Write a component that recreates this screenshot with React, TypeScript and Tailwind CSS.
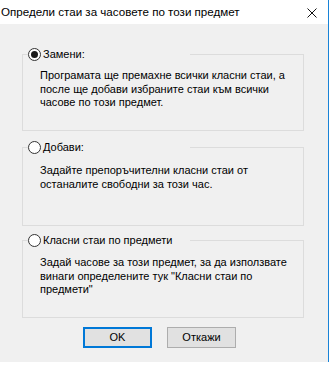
import React from "react";

type Option = {
  label: string;
  text: string;
  checked: boolean;
  gap: string;
  height: string;
  pad: string;
};

const options: Option[] = [
  {
    label: "Замени:",
    text: "Програмата ще премахне всички класни стаи, а после ще добави избраните стаи към всички часове по този предмет.",
    checked: true,
    gap: "mt-[24px]",
    height: "h-[83px]",
    pad: "pt-[8px]",
  },
  {
    label: "Добави:",
    text: "Задайте препоръчителни класни стаи от останалите свободни за този час.",
    checked: false,
    gap: "mt-[10px]",
    height: "h-[85px]",
    pad: "pt-[10px]",
  },
  {
    label: "Класни стаи по предмети",
    text: 'Задай часове за този предмет, за да използвате винаги определените тук "Класни стаи по предмети"',
    checked: false,
    gap: "mt-[8px]",
    height: "h-[84px]",
    pad: "pt-[9px]",
  },
];

function Radio({ checked }: { checked: boolean }) {
  return (
    <span className="flex h-[13px] w-[13px] shrink-0 items-center justify-center rounded-full border border-[#333333] bg-white">
      {checked && <span className="h-[7px] w-[7px] rounded-full bg-[#1a1a1a]" />}
    </span>
  );
}

export default function App() {
  return (
    <div className="h-[369px] w-[333px] bg-white font-['Liberation_Sans',sans-serif] text-[11px] text-black">
      <div className="flex h-[362px] w-[329px] flex-col border-r border-[#1883d7]">
        {/* title bar */}
        <div className="flex h-[24px] shrink-0 items-center justify-between bg-white pl-[1px] pr-[11px]">
          <span className="text-[11.6px] leading-none">Определи стаи за часовете по този предмет</span>
          <svg width="10" height="10" viewBox="0 0 10 10" className="mt-[1px]">
            <path d="M0.5 0.5 L9.5 9.5 M9.5 0.5 L0.5 9.5" stroke="#111" strokeWidth="1" />
          </svg>
        </div>

        <div className="flex flex-1 flex-col bg-[#f0f0f0]">
          {options.map((o) => (
            <fieldset
              key={o.label}
              className={`${o.gap} ${o.height} ml-[22px] w-[282px] border border-[#dcdcdc] px-0 pb-0`}
            >
              <legend className="ml-[5px] flex h-[13px] w-[162px] items-center gap-[2px] bg-[#f0f0f0] p-0 leading-none">
                <Radio checked={o.checked} />
                <span>{o.label}</span>
              </legend>
              <p className={`${o.pad} pl-[17px] pr-[10px] leading-[13.5px]`}>{o.text}</p>
            </fieldset>
          ))}

          <div className="mt-[9px] flex gap-[15px] pl-[83px]">
            <button className="h-[21px] w-[69px] border border-[#0078d7] bg-[#e1e1e1] leading-none shadow-[inset_0_0_0_1px_#0078d7]">
              OK
            </button>
            <button className="h-[21px] w-[69px] border border-[#adadad] bg-[#e1e1e1] leading-none">
              Откажи
            </button>
          </div>
        </div>
      </div>
    </div>
  );
}
